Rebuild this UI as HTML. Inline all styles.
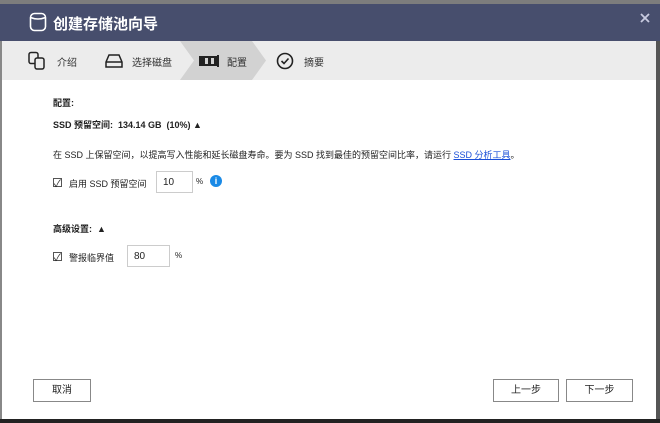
<!DOCTYPE html>
<html><head><meta charset="utf-8"><style>
*{margin:0;padding:0;box-sizing:border-box}
body{width:660px;height:423px;overflow:hidden;background:#fff;font-family:"Liberation Sans","Noto Sans CJK SC",sans-serif;color:#222;position:relative}
.top{position:absolute;left:0;top:0;width:660px;height:4px;background:#7d7d7d}
.hdr{position:absolute;left:0;top:4px;width:660px;height:37px;background:#474e6d;color:#fff;font-size:15px;font-weight:bold}
.hdr .t{position:absolute;left:53px;top:9px}
.steps{position:absolute;left:0;top:41px;width:660px;height:39px;background:#ececec}
.act{position:absolute;left:180px;top:0;width:86px;height:39px;background:#d2d2d2;clip-path:polygon(0 0,72px 0,86px 50%,72px 100%,0 100%,14px 50%)}
.s{position:absolute;top:13px;font-size:10px;color:#333}
.b{position:absolute;font-size:9px}
.lbl{font-weight:bold}
.inp{position:absolute;border:1px solid #ccc;height:22px;font-size:10px;padding:5px 0 0 6px;background:#fff}
.btn{position:absolute;top:379px;height:23px;border:1px solid #888;font-size:10px;text-align:center;line-height:21px;background:#fff}
.lb{position:absolute;left:0;top:41px;width:2px;height:382px;background:#888}
.rb{position:absolute;right:0;top:41px;width:4px;height:382px;background:#555}
.bb{position:absolute;left:0;bottom:0;width:660px;height:4px;background:#222}
.cb{position:absolute;width:9px;height:9px;border:1px solid #555}
</style></head><body>
<div class="top"></div>
<div class="hdr">
<svg style="position:absolute;left:29px;top:8px" width="18" height="20" viewBox="0 0 18 20"><rect x="1.5" y="1.5" width="15" height="17" rx="4" fill="none" stroke="#fff" stroke-width="1.6"/><path d="M1.5 5.5Q9 8.5 16.5 5.5" fill="none" stroke="#fff" stroke-width="1.6"/></svg>
<div class="t">创建存储池向导</div>
<svg style="position:absolute;left:640px;top:9px" width="10" height="10" viewBox="0 0 10 10" stroke="#c8cbe0" stroke-width="1.8"><path d="M1 1L9 9M9 1L1 9"/></svg>
</div>
<div class="steps">
<div class="act"></div>
<svg style="position:absolute;left:27px;top:10px" width="20" height="20" viewBox="0 0 20 20" fill="none" stroke="#222" stroke-width="1.5"><rect x="2" y="1.5" width="9" height="11" rx="2"/><rect x="8" y="7" width="9" height="11" rx="2" fill="#ececec"/></svg>
<div class="s" style="left:57px">介绍</div>
<svg style="position:absolute;left:105px;top:12px" width="18" height="16" viewBox="0 0 18 16" fill="none" stroke="#222" stroke-width="1.5"><path d="M4 2h10l3 7v5H1V9z"/><path d="M1 9h16"/></svg>
<div class="s" style="left:132px">选择磁盘</div>
<svg style="position:absolute;left:199px;top:14px" width="20" height="12" viewBox="0 0 20 12"><rect x="0" y="1" width="18" height="10" fill="#222"/><rect x="6" y="3" width="3" height="6" fill="#d2d2d2"/><rect x="12" y="3" width="3" height="6" fill="#d2d2d2"/><rect x="18" y="0" width="2" height="12" fill="#222"/></svg>
<div class="s" style="left:227px">配置</div>
<svg style="position:absolute;left:276px;top:11px" width="18" height="18" viewBox="0 0 18 18" fill="none" stroke="#222" stroke-width="1.6"><circle cx="9" cy="9" r="7.5"/><path d="M5.5 9l2.5 2.5 4.5-5"/></svg>
<div class="s" style="left:304px">摘要</div>
</div>
<div class="b lbl" style="left:53px;top:96px">配置:</div>
<div class="b lbl" style="left:53px;top:118px">SSD 预留空间:&nbsp; 134.14 GB &nbsp;(10%) ▲</div>
<div class="b" style="left:53px;top:148px">在 SSD 上保留空间，以提高写入性能和延长磁盘寿命。要为 SSD 找到最佳的预留空间比率，请运行 <span style="color:#1a4fd8;text-decoration:underline">SSD 分析工具</span>。</div>
<div class="cb" style="left:53px;top:178px"></div>
<div class="b" style="left:54px;top:175px;font-size:10px">✓</div>
<div class="b" style="left:69px;top:177px">启用 SSD 预留空间</div>
<div class="inp" style="left:156px;top:171px;width:37px">10</div>
<div class="b" style="left:196px;top:177px;font-size:8px">%</div>
<div style="position:absolute;left:210px;top:175px;width:12px;height:12px;border-radius:50%;background:#1a8ae6;color:#fff;font-size:9px;font-weight:bold;text-align:center;line-height:12px">i</div>
<div class="b lbl" style="left:53px;top:222px">高级设置: &nbsp;▲</div>
<div class="cb" style="left:53px;top:252px"></div>
<div class="b" style="left:54px;top:249px;font-size:10px">✓</div>
<div class="b" style="left:69px;top:251px">警报临界值</div>
<div class="inp" style="left:127px;top:245px;width:43px">80</div>
<div class="b" style="left:175px;top:251px;font-size:8px">%</div>
<div class="btn" style="left:33px;width:58px">取消</div>
<div class="btn" style="left:493px;width:66px">上一步</div>
<div class="btn" style="left:566px;width:67px">下一步</div>
<div class="lb"></div><div class="rb"></div><div class="bb"></div>
</body></html>
